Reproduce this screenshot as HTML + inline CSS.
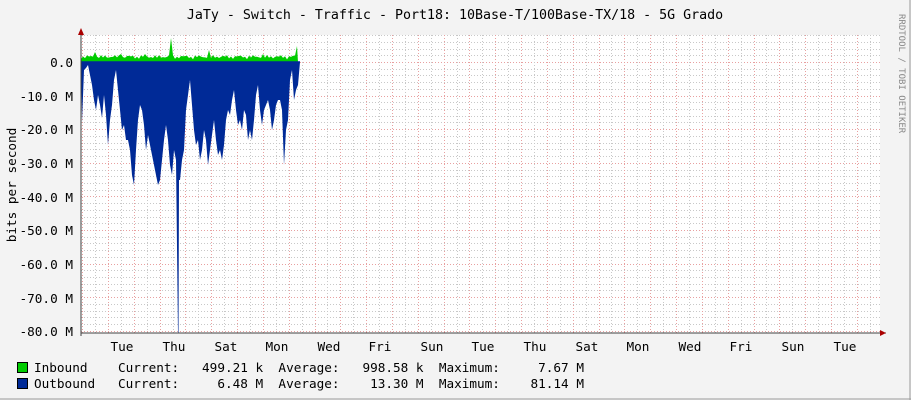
<!DOCTYPE html>
<html><head><meta charset="utf-8"><style>
html,body{margin:0;padding:0;background:#f3f3f3;}
svg{display:block;font-family:"DejaVu Sans Mono","Liberation Mono",monospace;}
</style></head><body>
<svg id="s" width="911" height="400" xmlns="http://www.w3.org/2000/svg">
<rect x="0" y="0" width="911" height="400" fill="#f3f3f3"/>
<line x1="910" y1="0" x2="910" y2="400" stroke="#999"/>
<line x1="0" y1="399" x2="911" y2="399" stroke="#999"/>
<rect x="81" y="35" width="799" height="298" fill="#ffffff"/>
<g id="grid"></g>
<polygon id="inb" fill="#00cc00"/>
<polygon id="outb" fill="#002a97"/>
<line x1="81" y1="62" x2="300" y2="62" stroke="#002a97" stroke-width="1.5"/>
<line x1="81" y1="333" x2="886" y2="333" stroke="#404040"/>
<line x1="81" y1="30" x2="81" y2="336" stroke="#404040"/>
<polygon points="886,333 880,330 880,336" fill="#a00"/>
<polygon points="81,28 78,35 84,35" fill="#a00"/>
<text x="455" y="19" font-size="13.3" text-anchor="middle" fill="#000">JaTy - Switch - Traffic - Port18: 10Base-T/100Base-TX/18 - 5G Grado</text>
<text transform="translate(16,185) rotate(-90)" font-size="12.7" text-anchor="middle" fill="#000">bits per second</text>
<g font-size="12.7" fill="#000" text-anchor="end">
<text x="73" y="67">0.0</text><text x="73" y="101">-10.0 M</text><text x="73" y="134">-20.0 M</text>
<text x="73" y="168">-30.0 M</text><text x="73" y="202">-40.0 M</text><text x="73" y="235">-50.0 M</text>
<text x="73" y="269">-60.0 M</text><text x="73" y="303">-70.0 M</text><text x="73" y="336">-80.0 M</text>
</g>
<g font-size="12.7" fill="#000" text-anchor="middle">
<text x="122" y="351">Tue</text><text x="174" y="351">Thu</text><text x="226" y="351">Sat</text><text x="277" y="351">Mon</text>
<text x="329" y="351">Wed</text><text x="380" y="351">Fri</text><text x="432" y="351">Sun</text><text x="483" y="351">Tue</text>
<text x="535" y="351">Thu</text><text x="587" y="351">Sat</text><text x="638" y="351">Mon</text><text x="690" y="351">Wed</text>
<text x="741" y="351">Fri</text><text x="793" y="351">Sun</text><text x="845" y="351">Tue</text>
</g>
<text transform="translate(899,14) rotate(90)" font-size="9" fill="#888">RRDTOOL / TOBI OETIKER</text>
<rect x="17.5" y="362.5" width="10" height="10" fill="#00cc00" stroke="#000"/>
<rect x="17.5" y="378.5" width="10" height="10" fill="#002a97" stroke="#000"/>
<text x="34" y="372" font-size="12.7" fill="#000" xml:space="preserve">Inbound    Current:   499.21 k  Average:   998.58 k  Maximum:     7.67 M</text>
<text x="34" y="388" font-size="12.7" fill="#000" xml:space="preserve">Outbound   Current:     6.48 M  Average:    13.30 M  Maximum:    81.14 M</text>
</svg>
<script>
var ns="http://www.w3.org/2000/svg",g=document.getElementById("grid");
function L(x1,y1,x2,y2,c){var l=document.createElementNS(ns,"line");l.setAttribute("x1",x1);l.setAttribute("y1",y1);l.setAttribute("x2",x2);l.setAttribute("y2",y2);l.setAttribute("stroke",c);l.setAttribute("stroke-dasharray","1,2");g.appendChild(l);}
for(var y=62-6.72*4;y<334;y+=6.72){var k=Math.round((y-62)/6.72);var major=(k%5==0)&&k>=0;L(81,Math.round(y)+0.5,880,Math.round(y)+0.5,major?"#e8a0a0":"#c8c8c8");}
for(var i=-1;i<31;i++){var x=108+25.82*i;if(x>81&&x<881)L(Math.round(x)+0.5,35,Math.round(x)+0.5,333,"#e8a0a0");var xm=x+12.91;if(xm>81&&xm<881)L(Math.round(xm)+0.5,35,Math.round(xm)+0.5,333,"#c8c8c8");}
var o=[122,70,68,65,75,85,100,110,95,105,118,95,115,145,120,105,80,70,90,110,130,125,140,140,150,175,185,150,120,105,110,125,150,135,145,155,165,175,185,180,160,140,125,140,165,175,150,160,333,180,160,150,110,95,80,105,130,145,140,160,150,130,140,165,150,135,120,140,155,150,160,145,120,110,115,100,90,110,125,120,130,110,115,140,130,140,120,95,85,110,125,110,105,100,110,130,120,105,100,100,110,165,130,120,80,70,100,90,85,62];
var p="81,62 ";for(var i=0;i<o.length;i++){var x=82+2*i;p+=x+","+o[i]+" ";if(o[i]==333)p+=(x+0.5)+",333 "+(x+1)+",180 ";}
p+="300,62";document.getElementById("outb").setAttribute("points",p);
var q="81,62 ";for(var x=81;x<=298;x+=2){var h=2+3*Math.abs(Math.sin(x*0.7))+2*Math.abs(Math.sin(x*0.23));if(x==95)h=10;if(x==171)h=24;if(x==209)h=12;if(x==297)h=16;if(x==121||x==145||x==263)h=8;q+=x+","+(62-h).toFixed(1)+" ";}
q+="298,62";document.getElementById("inb").setAttribute("points",q);
</script>
</body></html>
